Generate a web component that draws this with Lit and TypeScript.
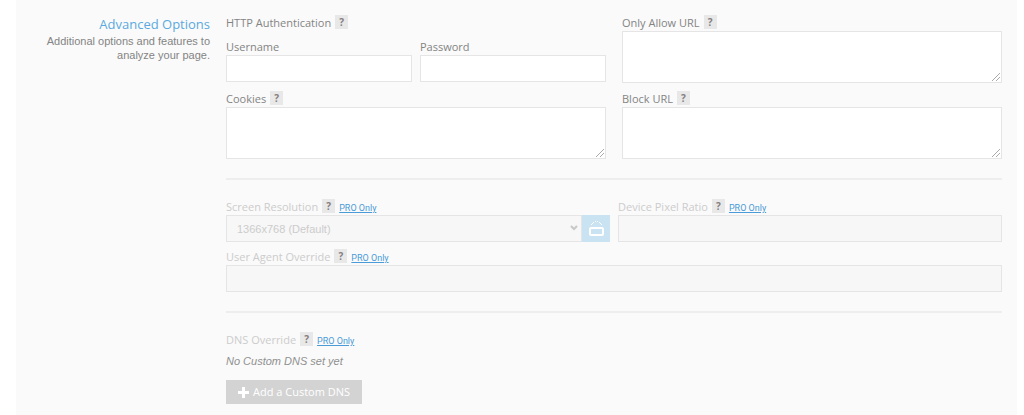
import { LitElement, html, css, svg, nothing } from "lit";
import { customElement, property } from "lit/decorators.js";

const rotateIcon = svg`
  <path d="M3 4.5h1M4 3.5h1M5 2.5h1M7 1.5h1M9 1.5h1M11 2.5h1M12 3.5h1M13 4.5h1" stroke-width="1"/>
  <rect x="2" y="8" width="13" height="7" rx="1" stroke-width="2"/>`;

@customElement("help-tip")
class HelpTip extends LitElement {
  static styles = css`
    :host { display: inline-flex; }
    .tip {
      width: 13px; height: 14px; padding: 0; border: 0;
      background: #e8e8e8; color: #857f7f;
      font: bold 10px/14px "Open Sans", sans-serif; text-align: center;
    }
  `;
  render() {
    return html`<button class="tip" type="button" aria-label="Help">?</button>`;
  }
}

@customElement("field-label")
class FieldLabel extends LitElement {
  @property() text = "";
  @property({ type: Boolean }) pro = false;
  static styles = css`
    :host { display: flex; height: 16px; align-items: flex-start; line-height: 16px; white-space: nowrap; }
    .text { margin-right: 4px; }
    .pro .text { color: #ccc; }
    .row { display: flex; }
    .link { margin-left: 4px; font: 9px/18px Roboto, sans-serif; color: #4a9bd8; text-decoration: underline; }
  `;
  render() {
    return html`<span class="row ${this.pro ? "pro" : ""}">
      <span class="text">${this.text}</span><help-tip></help-tip>
      ${this.pro ? html`<a class="link" href="#pro">PRO Only</a>` : nothing}
    </span>`;
  }
}

@customElement("app-root")
class AppRoot extends LitElement {
  static styles = css`
    :host { display: block; font: 11px/16px "Open Sans", sans-serif; color: #848484; }
    * { box-sizing: border-box; }
    .panel {
      display: grid; grid-template-columns: 194px minmax(0, 1fr); column-gap: 16px;
      margin: 0 7px 0 16px; padding: 15px 15px 16px 0; min-height: 100vh; background: #fafafa;
    }
    .side { text-align: right; }
    .title { margin: 0 0 1px; font-size: 13px; line-height: 18px; font-weight: 400; color: #5aa9e0; }
    .intro { margin: 0; font: 11px/14px "Liberation Sans", sans-serif; }
    .pair { display: grid; grid-template-columns: 1fr 1fr; gap: 8px 16px; }
    .tight { column-gap: 8px; }
    .auth { margin-top: 8px; }
    label { display: block; }
    .box {
      display: block; width: 100%; height: 27px; margin: 0; padding: 0 6px;
      border: 1px solid #e5e5e5; border-radius: 0; background: #fff;
      font: 11px/16px "Liberation Sans", sans-serif; color: #808080;
    }
    .area { height: 52px; resize: vertical; }
    .area::-webkit-resizer {
      background: linear-gradient(135deg, transparent 48%, #aaa 48%, #aaa 56%, transparent 56%, transparent 72%, #aaa 72%, #aaa 80%, transparent 80%) right 1px bottom 1px / 8px 8px no-repeat;
    }
    .box:disabled { background: #f7f7f7; color: #ccc; opacity: 1; }
    .rule { height: 2px; margin: 19px 0; border: 0; background: #eee; }
    .resolution { display: flex; }
    .picker { position: relative; flex: 1; }
    .select { appearance: none; padding: 0 10px; }
    .chevron { position: absolute; right: 4px; top: 10px; }
    .rotate { display: flex; align-items: center; justify-content: center; width: 28px; height: 27px; padding: 0; border: 0; background: #cae3f2; }
    .agent { margin-top: 7px; }
    .empty { margin: 5px 0 11px; font: italic 11px/16px "Liberation Sans", sans-serif; color: #909090; }
    .add {
      display: flex; align-items: center; gap: 4px; height: 24px; padding: 0 12px;
      border: 0; background: #d3d3d3; color: #fff; font: 11px/16px "Open Sans", sans-serif;
    }
  `;
  render() {
    return html`
      <main class="panel">
        <header class="side">
          <h2 class="title">Advanced Options</h2>
          <p class="intro">Additional options and features to analyze your page.</p>
        </header>
        <form>
          <div class="pair">
            <div>
              <field-label text="HTTP Authentication"></field-label>
              <div class="pair tight auth">
                <div><label for="user">Username</label><input class="box" id="user" type="text"></div>
                <div><label for="pass">Password</label><input class="box" id="pass" type="password"></div>
              </div>
            </div>
            <div><label for="allow"><field-label text="Only Allow URL"></field-label></label><textarea class="box area" id="allow"></textarea></div>
            <div><label for="cookies"><field-label text="Cookies"></field-label></label><textarea class="box area" id="cookies"></textarea></div>
            <div><label for="block"><field-label text="Block URL"></field-label></label><textarea class="box area" id="block"></textarea></div>
          </div>
          <hr class="rule">
          <div class="pair tight">
            <div>
              <label for="screen"><field-label text="Screen Resolution" pro></field-label></label>
              <div class="resolution">
                <div class="picker">
                  <select class="box select" id="screen" disabled><option>1366x768 (Default)</option></select>
                  <svg class="chevron" width="8" height="6" fill="none" stroke="#c8c8c8" stroke-width="2"><path d="M1 1l3 3 3-3"/></svg>
                </div>
                <button class="rotate" type="button" aria-label="Rotate screen" disabled>
                  <svg width="17" height="17" fill="none" stroke="#fff">${rotateIcon}</svg>
                </button>
              </div>
            </div>
            <div><label for="ratio"><field-label text="Device Pixel Ratio" pro></field-label></label><input class="box" id="ratio" type="text" disabled></div>
          </div>
          <div class="agent"><label for="agent"><field-label text="User Agent Override" pro></field-label></label><input class="box" id="agent" type="text" disabled></div>
          <hr class="rule">
          <field-label text="DNS Override" pro></field-label>
          <p class="empty">No Custom DNS set yet</p>
          <button class="add" type="button" disabled>
            <svg width="11" height="11" stroke="#fff" stroke-width="3"><path d="M5.5 0v11M0 5.5h11"/></svg>
            Add a Custom DNS
          </button>
        </form>
      </main>`;
  }
}
